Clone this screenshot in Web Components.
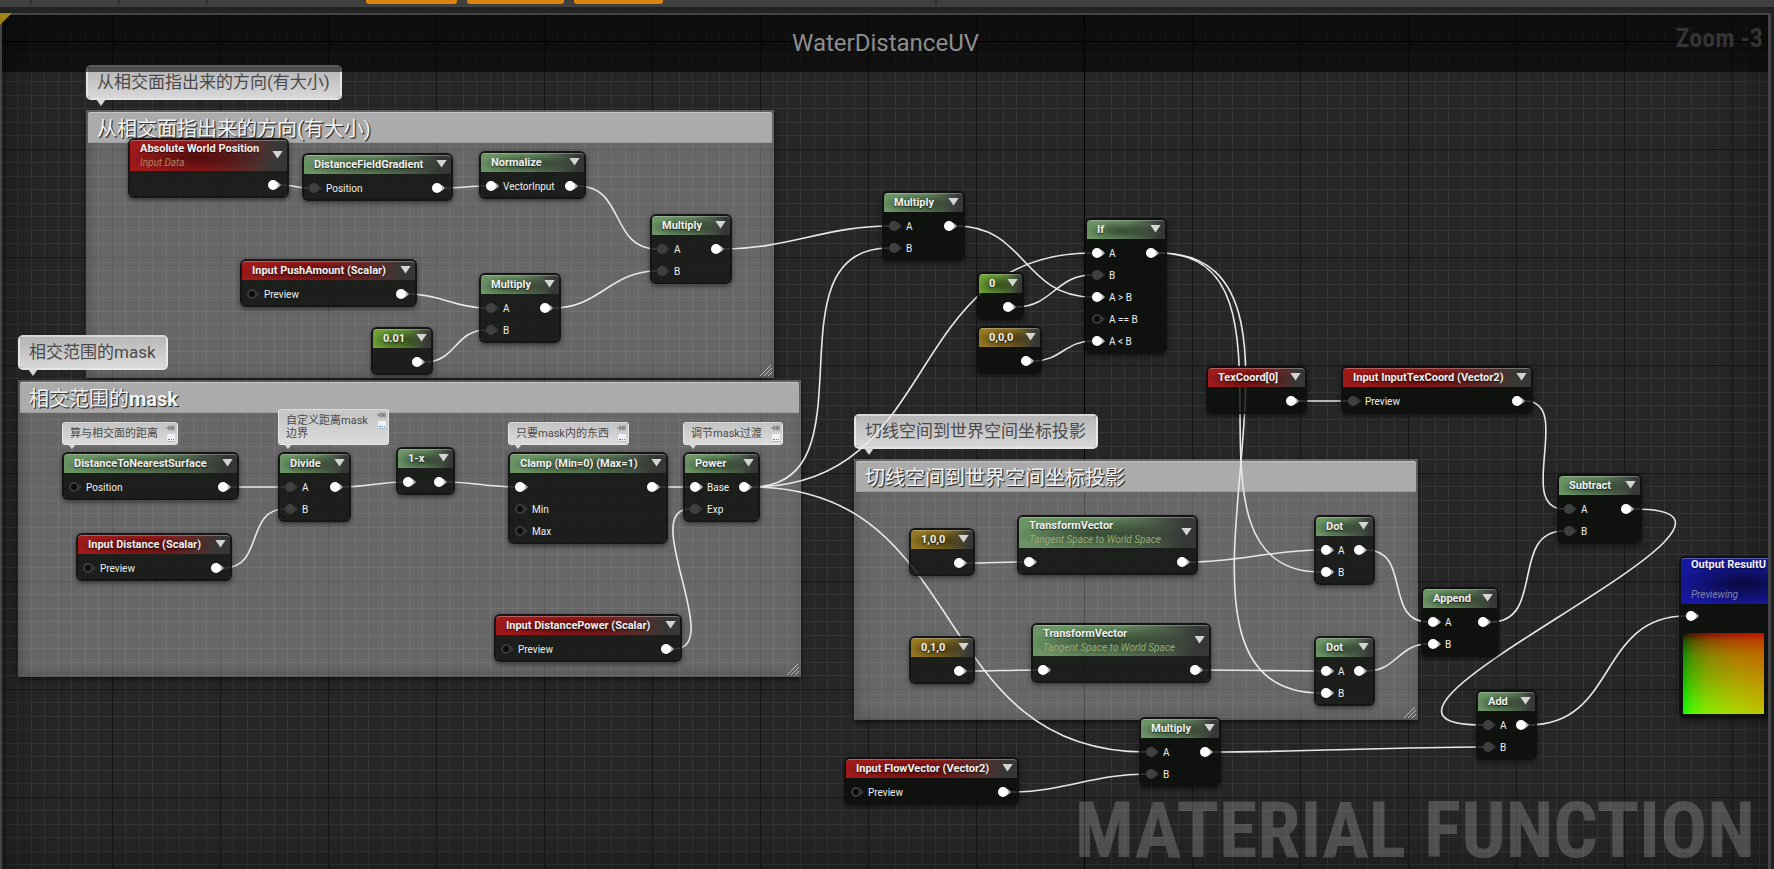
<!DOCTYPE html>
<html lang="zh-CN">
<head>
<meta charset="utf-8">
<title>WaterDistanceUV - Material Function</title>
<style>
  html, body { height: 100%; margin: 0; }
  body {
    display: flex; flex-direction: column; overflow: hidden;
    background: #222; color: #eee;
    font-family: Roboto, "Noto Sans CJK SC", sans-serif;
  }
</style>
</head>
<body>

<editor-toolbar></editor-toolbar>

<graph-canvas>
  <span slot="title">WaterDistanceUV</span>
  <span slot="zoom">Zoom -3</span>
  <span slot="watermark">MATERIAL FUNCTION</span>

  <graph-comment x="86" y="110" w="688" h="268">从相交面指出来的方向(有大小)</graph-comment>
  <graph-comment x="18" y="380" w="783" h="297">相交范围的<b>mask</b></graph-comment>
  <graph-comment x="854" y="459" w="564" h="261">切线空间到世界空间坐标投影</graph-comment>

  <comment-bubble x="86" y="65" w="256">从相交面指出来的方向(有大小)</comment-bubble>
  <comment-bubble x="18" y="335" w="150">相交范围的mask</comment-bubble>
  <comment-bubble x="854" y="414" w="244">切线空间到世界空间坐标投影</comment-bubble>
  <comment-bubble small x="62" y="422" w="116">算与相交面的距离</comment-bubble>
  <comment-bubble small x="278" y="409" w="111">自定义距离mask<br>边界</comment-bubble>
  <comment-bubble small x="508" y="422" w="121">只要mask内的东西</comment-bubble>
  <comment-bubble small x="683" y="422" w="100">调节mask过渡</comment-bubble>

  <graph-wires></graph-wires>

  <graph-node id="awp" kind="red" x="128" y="138" w="161" sub>Absolute World Position<i slot="sub">Input Data</i>
    <graph-pin slot="out" on></graph-pin></graph-node>
  <graph-node id="dfg" kind="green" x="302" y="153" w="151">DistanceFieldGradient
    <graph-pin slot="in" dim>Position</graph-pin><graph-pin slot="out" on></graph-pin></graph-node>
  <graph-node id="norm" kind="green" x="479" y="151" w="107">Normalize
    <graph-pin slot="in" on>VectorInput</graph-pin><graph-pin slot="out" on></graph-pin></graph-node>
  <graph-node id="mul1" kind="green" x="650" y="214" w="82">Multiply
    <graph-pin slot="in" dim>A</graph-pin><graph-pin slot="in" dim>B</graph-pin><graph-pin slot="out" on></graph-pin></graph-node>
  <graph-node id="push" kind="red" x="240" y="259" w="177">Input PushAmount (Scalar)
    <graph-pin slot="in">Preview</graph-pin><graph-pin slot="out" on></graph-pin></graph-node>
  <graph-node id="mul2" kind="green" x="479" y="273" w="82">Multiply
    <graph-pin slot="in" dim>A</graph-pin><graph-pin slot="in" dim>B</graph-pin><graph-pin slot="out" on></graph-pin></graph-node>
  <graph-node id="c001" kind="lime" x="371" y="327" w="62">0.01
    <graph-pin slot="out" on></graph-pin></graph-node>

  <graph-node id="dns" kind="green" x="62" y="452" w="177">DistanceToNearestSurface
    <graph-pin slot="in">Position</graph-pin><graph-pin slot="out" on></graph-pin></graph-node>
  <graph-node id="div" kind="green" x="278" y="452" w="73">Divide
    <graph-pin slot="in" dim>A</graph-pin><graph-pin slot="in" dim>B</graph-pin><graph-pin slot="out" on></graph-pin></graph-node>
  <graph-node id="omx" kind="green" x="396" y="447" w="59">1-x
    <graph-pin slot="in" on></graph-pin><graph-pin slot="out" on></graph-pin></graph-node>
  <graph-node id="dist" kind="red" x="76" y="533" w="156">Input Distance (Scalar)
    <graph-pin slot="in">Preview</graph-pin><graph-pin slot="out" on></graph-pin></graph-node>
  <graph-node id="clamp" kind="green" x="508" y="452" w="160">Clamp (Min=0) (Max=1)
    <graph-pin slot="in" on></graph-pin><graph-pin slot="in">Min</graph-pin><graph-pin slot="in">Max</graph-pin><graph-pin slot="out" on></graph-pin></graph-node>
  <graph-node id="pow" kind="green" x="683" y="452" w="77">Power
    <graph-pin slot="in" on>Base</graph-pin><graph-pin slot="in" dim>Exp</graph-pin><graph-pin slot="out" on></graph-pin></graph-node>
  <graph-node id="dpow" kind="red" x="494" y="614" w="188">Input DistancePower (Scalar)
    <graph-pin slot="in">Preview</graph-pin><graph-pin slot="out" on></graph-pin></graph-node>

  <graph-node id="mul3" kind="green" x="882" y="191" w="83">Multiply
    <graph-pin slot="in" dim>A</graph-pin><graph-pin slot="in" dim>B</graph-pin><graph-pin slot="out" on></graph-pin></graph-node>
  <graph-node id="c0" kind="lime" x="977" y="272" w="47">0
    <graph-pin slot="out" on></graph-pin></graph-node>
  <graph-node id="c000" kind="gold" x="977" y="326" w="65">0,0,0
    <graph-pin slot="out" on></graph-pin></graph-node>
  <graph-node id="if" kind="green" x="1085" y="218" w="82">If
    <graph-pin slot="in" on>A</graph-pin><graph-pin slot="in" dim>B</graph-pin><graph-pin slot="in" on>A &gt; B</graph-pin><graph-pin slot="in">A == B</graph-pin><graph-pin slot="in" on>A &lt; B</graph-pin><graph-pin slot="out" on></graph-pin></graph-node>
  <graph-node id="tex" kind="red" x="1206" y="366" w="101">TexCoord[0]
    <graph-pin slot="out" on></graph-pin></graph-node>
  <graph-node id="itex" kind="red" x="1341" y="366" w="192">Input InputTexCoord (Vector2)
    <graph-pin slot="in" dim>Preview</graph-pin><graph-pin slot="out" on></graph-pin></graph-node>
  <graph-node id="subt" kind="green" x="1557" y="474" w="85">Subtract
    <graph-pin slot="in" dim>A</graph-pin><graph-pin slot="in" dim>B</graph-pin><graph-pin slot="out" on></graph-pin></graph-node>

  <graph-node id="v100" kind="gold" x="909" y="528" w="66">1,0,0
    <graph-pin slot="out" on></graph-pin></graph-node>
  <graph-node id="tv1" kind="green" x="1017" y="515" w="181" sub>TransformVector<i slot="sub">Tangent Space to World Space</i>
    <graph-pin slot="in" on></graph-pin><graph-pin slot="out" on></graph-pin></graph-node>
  <graph-node id="v010" kind="gold" x="909" y="636" w="66">0,1,0
    <graph-pin slot="out" on></graph-pin></graph-node>
  <graph-node id="tv2" kind="green" x="1031" y="623" w="180" sub>TransformVector<i slot="sub">Tangent Space to World Space</i>
    <graph-pin slot="in" on></graph-pin><graph-pin slot="out" on></graph-pin></graph-node>
  <graph-node id="dot1" kind="green" x="1314" y="515" w="61">Dot
    <graph-pin slot="in" on>A</graph-pin><graph-pin slot="in" on>B</graph-pin><graph-pin slot="out" on></graph-pin></graph-node>
  <graph-node id="dot2" kind="green" x="1314" y="636" w="61">Dot
    <graph-pin slot="in" on>A</graph-pin><graph-pin slot="in" on>B</graph-pin><graph-pin slot="out" on></graph-pin></graph-node>
  <graph-node id="app" kind="green" x="1421" y="587" w="78">Append
    <graph-pin slot="in" on>A</graph-pin><graph-pin slot="in" on>B</graph-pin><graph-pin slot="out" on></graph-pin></graph-node>
  <graph-node id="add" kind="green" x="1476" y="690" w="61">Add
    <graph-pin slot="in" dim>A</graph-pin><graph-pin slot="in" dim>B</graph-pin><graph-pin slot="out" on></graph-pin></graph-node>
  <graph-node id="mul4" kind="green" x="1139" y="717" w="82">Multiply
    <graph-pin slot="in" dim>A</graph-pin><graph-pin slot="in" dim>B</graph-pin><graph-pin slot="out" on></graph-pin></graph-node>
  <graph-node id="flow" kind="red" x="844" y="757" w="175">Input FlowVector (Vector2)
    <graph-pin slot="in">Preview</graph-pin><graph-pin slot="out" on></graph-pin></graph-node>
  <graph-node id="outp" kind="blue" x="1679" y="556" w="130" sub tall>Output ResultU<i slot="sub">Previewing</i>
    <graph-pin slot="in" on></graph-pin><material-preview slot="preview"></material-preview></graph-node>
</graph-canvas>

<script>
const shadow = (host, html) => {
  const t = document.createElement('template');
  t.innerHTML = html;
  const root = host.attachShadow({ mode: 'open' });
  root.append(t.content);
  return root;
};

/* Canvas items carry their own graph coordinates. */
class CanvasItem extends HTMLElement {
  place() {
    this.style.left = this.getAttribute('x') + 'px';
    this.style.top = this.getAttribute('y') + 'px';
    this.style.width = this.getAttribute('w') + 'px';
    if (this.hasAttribute('h')) this.style.height = this.getAttribute('h') + 'px';
  }
}

customElements.define('editor-toolbar', class extends HTMLElement {
  constructor() {
    super();
    shadow(this, `
      <style>
        :host { display: block; flex: none; background: #404040; height: 7px; margin-bottom: 6px; }
        .row { display: flex; height: 4px; }
        i { width: 2px; background: #303030; margin-right: 86px; }
        i:first-child { margin-left: 30px; }
        i.wide { margin-right: 158px; }
        i.last { margin-left: 272px; }
        button { border: 0; padding: 0; height: 4px; width: 91px; margin-right: 10px; background: #db8410; border-radius: 0 0 3px 3px; }
        button.w { width: 97px; margin-right: 10px; }
        button.e { width: 89px; margin-right: 0; }
      </style>
      <div class="row"><i></i><i></i><i class="wide"></i>
        <button aria-label="Live Preview"></button><button class="w" aria-label="Live Nodes"></button><button class="e" aria-label="Live Update"></button>
        <i class="last"></i></div>`);
  }
});

customElements.define('graph-canvas', class extends HTMLElement {
  constructor() {
    super();
    const minor = [13, 27, 40, 54, 67, 81, 94]
      .map(p => `<path d="M${p} 0h1v108h-1zM0 ${p}h108v1H0z" fill="#353535"/>`).join('');
    shadow(this, `
      <style>
        :host { display: block; flex: 1; min-height: 0; position: relative; overflow: hidden; margin-right: 3px; background: #262626; }
        .grid { position: absolute; inset: 0; width: 100%; height: 100%; }
        .shade { position: absolute; inset: 0; box-shadow: inset 0 0 60px rgba(0,0,0,.4); }
        .plane { position: absolute; inset: -13px 0 0 0; }
        .band { position: absolute; inset: 2px 2px auto 2px; height: 57px; background: rgba(0,0,0,.58);
                display: grid; grid-template-columns: 1fr auto 1fr; }
        h1 { grid-column: 2; margin: 0; font-size: 24px; line-height: 56px; font-weight: 400; color: #8d8d8d; }
        .zoom { justify-self: end; padding-right: 6px; font: bold 26px/46px "Roboto Condensed", "Liberation Sans Narrow", Roboto, sans-serif; color: #343434; }
        .mark { position: absolute; right: 16px; bottom: 0; font: bold 78px/76px "Roboto Condensed", "Liberation Sans Narrow", Roboto, sans-serif;
                color: rgba(255,255,255,.2); white-space: nowrap; }
        .frame { position: absolute; inset: 0; border: 2px solid #444; border-right-width: 3px; border-bottom: 0; pointer-events: none; }
        .corner { position: absolute; left: 0; top: 0; width: 12px; height: 12px; }
      </style>
      <svg class="grid" aria-hidden="true">
        <defs><pattern id="g" x="4" y="28" width="108" height="108" patternUnits="userSpaceOnUse">
          ${minor}<path d="M0 0h1v108h-1zM0 0h108v1H0z" fill="#161616"/></pattern></defs>
        <rect width="100%" height="100%" fill="url(#g)"/>
        <path d="M1084 0h1v2000h-1zM0 28h4000v1H0z" fill="#000"/>
      </svg>
      <div class="shade"></div>
      <div class="mark"><slot name="watermark"></slot></div>
      <div class="plane"><slot></slot></div>
      <div class="band"><h1><slot name="title"></slot></h1><div class="zoom"><slot name="zoom"></slot></div></div>
      <div class="frame"></div>
      <svg class="corner" viewBox="0 0 12 12" aria-hidden="true"><path d="M0 0h12L0 12z" fill="#a08315"/></svg>`);
  }
});

customElements.define('graph-comment', class extends CanvasItem {
  constructor() {
    super();
    shadow(this, `
      <style>
        :host { position: absolute; box-sizing: border-box; padding: 2px; background: rgba(255,255,255,.3);
                box-shadow: 0 2px 5px rgba(0,0,0,.6), inset 2px -2px 12px rgba(0,0,0,.22); }
        header { box-sizing: border-box; height: 31px; padding-left: 9px; background: #ababab;
                 border-top: 1px solid #c4c4c4; border-bottom: 1px solid #9d9d9d; border-radius: 2px 2px 0 0;
                 font-size: 20px; line-height: 32px; color: #f4f4f4; text-shadow: 1px 1px 0 #333, 1px 1px 1px #444; white-space: nowrap; }
        svg { position: absolute; right: 2px; bottom: 2px; width: 12px; height: 11px; }
      </style>
      <header><slot></slot></header>
      <svg viewBox="0 0 12 11" aria-hidden="true"><path d="M0 11L11 0M4 11L12 3M8 11L12 7" stroke="#bbb" fill="none"/></svg>`);
  }
  connectedCallback() { this.place(); }
});

customElements.define('comment-bubble', class extends CanvasItem {
  constructor() {
    super();
    shadow(this, `
      <style>
        :host { position: absolute; box-sizing: border-box; display: flex; justify-content: space-between;
                padding: 0 9px; border: 2px solid rgba(240,240,240,.95); border-top-color: rgba(225,225,225,.95); border-radius: 5px;
                background: linear-gradient(rgba(188,188,188,.95), rgba(226,226,226,.95)) padding-box;
                color: #4a4a4a; font-size: 17px; line-height: 31px; white-space: nowrap; }
        :host([small]) { border-width: 1px; border-radius: 3px; padding: 4px 2px 4px 7px; font-size: 11px; line-height: 13px;
                background: linear-gradient(rgba(200,200,200,.95), rgba(226,226,226,.95)) padding-box; }
        .tail { position: absolute; left: 8px; top: 100%; margin-top: 1px; border: solid transparent; border-width: 7px 5px 0; border-top-color: #d8d8d8; }
        :host([small]) .tail { left: 5px; margin-top: 0; border-width: 5px 4px 0; }
        svg { display: none; width: 9px; height: 17px; margin: -2px 0; }
        :host([small]) svg { display: block; }
      </style>
      <div class="text"><slot></slot></div>
      <svg viewBox="0 0 9 17" aria-hidden="true">
        <path d="M0 3h3M3 0.5v5M3 2h3v2H3M6 0.5v5M8 0.5v5M6 3h2" stroke="#777" fill="none"/>
        <rect x="1" y="9" width="8" height="8" fill="#eef2f6"/><path d="M2 14.500h2M5 14.500h1M7 14.500h1" stroke="#4f86a8"/><path d="M1 16.500h8" stroke="#a9bcc8"/>
      </svg>
      <div class="tail"></div>`);
  }
  connectedCallback() { this.place(); }
});

customElements.define('graph-pin', class extends HTMLElement {
  constructor() {
    super();
    shadow(this, `
      <style>
        :host { display: flex; align-items: center; gap: 4px; height: 22px; font-size: 10px; color: #eee; white-space: nowrap;
                --nub: #333; --ring: #3b3b3b; --core: #0b0b0b; }
        :host([on]) { --nub: #b4b4b4; --ring: #fff; --core: #fff; }
        :host([dim]) { --nub: #333; --ring: #404040; --core: #404040; }
        svg { width: 13px; height: 12px; flex: none; }
      </style>
      <svg viewBox="0 0 13 12" aria-hidden="true">
        <path d="M8 2.500Q11 3 13 6Q11 9 8 9.500z" style="fill:var(--nub)"/>
        <circle cx="5" cy="6" r="4" style="fill:var(--core);stroke:var(--ring)" stroke-width="2"/>
      </svg><slot></slot>`);
  }
});

customElements.define('material-preview', class extends HTMLElement {
  constructor() {
    super();
    shadow(this, `
      <style>
        :host { display: block; width: 81px; height: 81px; margin: 6px 0 2px 2px;
          background: linear-gradient(90deg, rgba(0,0,0,0), rgba(0,0,0,.23)),
                      linear-gradient(90deg, #100000, #500000 10%, #900000 30%, #c40000 60%, #f80000),
                      linear-gradient(#001000, #005800 10%, #008e00 28%, #00c000 60%, #0f0);
          background-blend-mode: normal, lighten, normal; }
      </style>`);
  }
});

customElements.define('graph-node', class extends CanvasItem {
  constructor() {
    super();
    shadow(this, `
      <style>
        :host { position: absolute; box-sizing: border-box; border: 2px solid rgba(14,14,14,.92); border-radius: 6px;
                background: rgba(9,12,8,.8) padding-box; box-shadow: 0 2px 5px rgba(0,0,0,.5); --c: #6b9465; --s: #9aa977; }
        :host([kind=red]) { --c: #a01a1a; --s: #b08060; }
        :host([kind=lime]) { --c: #6ba035; }
        :host([kind=gold]) { --c: #967820; }
        :host([kind=blue]) { --c: #1618a0; --s: #8583b0; }
        header { display: flex; align-items: center; justify-content: space-between; box-sizing: border-box; height: 19px;
                 padding: 0 4px 0 10px; border-top: 1px solid rgba(255,255,255,.3); border-radius: 4px 4px 0 0; overflow: hidden;
                 background: radial-gradient(ellipse 46% 60% at 44% 56%, rgba(0,0,0,.5), rgba(0,0,0,.28) 50%, transparent),
                             linear-gradient(100deg, var(--c) 48%, #363836 92%); }
        :host([sub]) header { height: 31px; }
        :host([tall]) header { height: 46px; padding-bottom: 3px; background: radial-gradient(ellipse 55% 50% at 50% 55%, rgba(0,0,0,.6), rgba(0,0,0,.3) 55%, transparent), var(--c); }
        .t { font-size: 11px; font-weight: 700; line-height: 16px; height: 16px; color: #f0f0f0; white-space: nowrap; text-shadow: 0 1px 1px rgba(0,0,0,.6); }
        .s { display: none; font-size: 10px; line-height: 14px; color: var(--s); white-space: nowrap; }
        :host([sub]) .s { display: block; }
        :host([sub]) .t { line-height: 14px; height: 14px; }
        :host([tall]) .s { margin-top: 16px; }
        button { border: 0; padding: 0; width: 11px; height: 8px; flex: none; background: #d4d4d4; clip-path: polygon(0 0, 100% 0, 50% 100%); margin-bottom: 3px; }
        :host([tall]) button { display: none; }
        .body { display: flex; justify-content: space-between; padding: 3px 6px 0 5px; }
        :host([tall]) .body { padding-top: 1px; }
      </style>
      <header><div><div class="t"><slot></slot></div><div class="s"><slot name="sub"></slot></div></div><button aria-label="Toggle preview"></button></header>
      <div class="body"><div><slot name="in"></slot></div><div><slot name="out"></slot></div></div>
      <slot name="preview"></slot>`);
  }
  connectedCallback() { this.place(); }
  /* Wire anchor of a pin: the tip of an output, the left edge of an input. */
  pin(side, index) {
    const p = this.querySelectorAll(`graph-pin[slot=${side}]`)[index].shadowRoot.querySelector('svg').getBoundingClientRect();
    return side === 'out' ? [p.right, p.top + 6] : [p.left, p.top + 6];
  }
});

customElements.define('graph-wires', class extends HTMLElement {
  constructor() {
    super();
    shadow(this, `
      <style>
        :host { position: absolute; inset: 0; pointer-events: none; }
        svg { width: 100%; height: 100%; overflow: visible; }
        path { fill: none; stroke: #e8e8e8; stroke-width: 1.6; }
      </style><svg aria-hidden="true"></svg>`);
  }
  connect(links) {
    const o = this.getBoundingClientRect();
    this.shadowRoot.querySelector('svg').innerHTML = links.map(([a, b, i]) => {
      const [x1, y1] = document.getElementById(a).pin('out', 0);
      const [x2, y2] = document.getElementById(b).pin('in', i);
      const dx = x2 - x1, dy = Math.abs(y2 - y1);
      const c = (dx >= -20 ? Math.abs(dx) + dy : 2.3 * Math.min(-dx, 200) + 1.1 * Math.min(dy, 200)) / 3;
      const [sx, sy, ex, ey] = [x1 - o.left, y1 - o.top, x2 - o.left, y2 - o.top];
      return `<path d="M${sx} ${sy}C${sx + c} ${sy} ${ex - c} ${ey} ${ex} ${ey}"/>`;
    }).join('');
  }
});

const links = [
  ['awp', 'dfg', 0], ['dfg', 'norm', 0], ['norm', 'mul1', 0], ['push', 'mul2', 0], ['c001', 'mul2', 1], ['mul2', 'mul1', 1],
  ['dns', 'div', 0], ['dist', 'div', 1], ['div', 'omx', 0], ['omx', 'clamp', 0], ['clamp', 'pow', 0], ['dpow', 'pow', 1],
  ['mul1', 'mul3', 0], ['pow', 'mul3', 1], ['pow', 'if', 0], ['pow', 'mul4', 0], ['c0', 'if', 1], ['mul3', 'if', 2], ['c000', 'if', 4],
  ['if', 'dot1', 1], ['if', 'dot2', 1], ['tex', 'itex', 0], ['itex', 'subt', 0], ['app', 'subt', 1],
  ['v100', 'tv1', 0], ['v010', 'tv2', 0], ['tv1', 'dot1', 0], ['tv2', 'dot2', 0], ['dot1', 'app', 0], ['dot2', 'app', 1],
  ['flow', 'mul4', 1], ['mul4', 'add', 1], ['subt', 'add', 0], ['add', 'outp', 0],
];
const wires = document.querySelector('graph-wires');
wires.connect(links);
addEventListener('resize', () => wires.connect(links));
</script>
</body>
</html>
